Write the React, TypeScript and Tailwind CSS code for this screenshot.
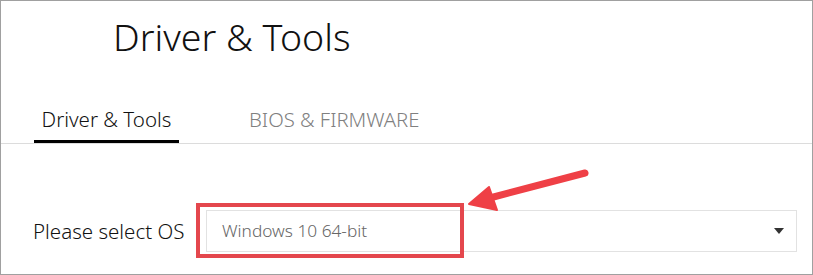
export default function App() {
  return (
    <div className="w-[813px] h-[275px] bg-white border border-[#a0a0a0] overflow-hidden relative font-['Noto_Sans',sans-serif]">
      {/* Page title */}
      <h1 className="pl-[112px] pt-[9px] text-[37.5px] leading-[53px] text-[#111] font-[350]">Driver &amp; Tools</h1>

      {/* Tabs */}
      <div className="mt-[43px] flex border-b border-[#dcdcdc] pl-[33px]">
        <div className="w-[145px] border-b-[3px] border-black pb-[8px] text-center text-[20.5px] leading-[26px] text-[#111] font-[350]">
          Driver &amp; Tools
        </div>
        <div className="ml-[70px] pb-[8px] text-[20.3px] leading-[26px] text-[#808080] font-[350]">BIOS &amp; FIRMWARE</div>
      </div>

      {/* OS select */}
      <div className="mt-[66px] flex items-center pl-[32px] pr-[15px]">
        <span className="w-[173px] text-[20.5px] leading-[30px] text-[#111] font-[350]">Please select OS</span>
        <div className="flex-1 h-[42px] border border-[#e2e2e2] flex items-center justify-between pl-[15px] pr-[12px]">
          <span className="text-[17.3px] text-[#666] font-[350]">Windows 10 64-bit</span>
          <svg width="10" height="6" viewBox="0 0 10 6" className="text-[#333]">
            <path d="M0 0h10L5 6z" fill="currentColor" />
          </svg>
        </div>
      </div>

      {/* Annotation: highlight box */}
      <div className="absolute left-[195px] top-[202px] w-[268px] h-[55px] border-[4px] border-[#e4474d]" />

      {/* Annotation: arrow */}
      <svg className="absolute left-0 top-0" width="813" height="275" viewBox="0 0 813 275">
        <line x1="584" y1="172" x2="485" y2="198" stroke="#ef4046" strokeWidth="7" strokeLinecap="round" />
        <path d="M468 203 L488 186 L496 209 Z" fill="#ef4046" stroke="#ef4046" strokeWidth="2" strokeLinejoin="round" />
      </svg>
    </div>
  )
}
